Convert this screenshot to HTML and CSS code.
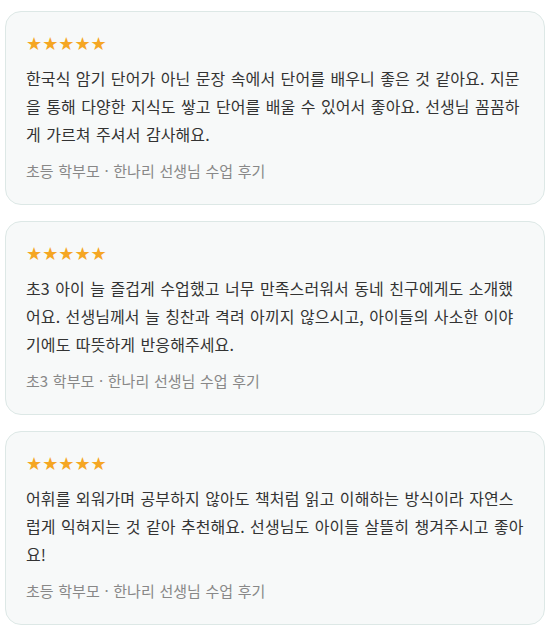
FILE: index.html
```html
<!DOCTYPE html>
<html lang="ko">
<head>
<meta charset="utf-8">
<link rel="stylesheet" href="styles.css">
</head>
<body>
<div class="reviews">
  <div class="card">
    <div class="stars">★★★★★</div>
    <p class="text">한국식 암기 단어가 아닌 문장 속에서 단어를 배우니 좋은 것 같아요. 지문을 통해 다양한 지식도 쌓고 단어를 배울 수 있어서 좋아요. 선생님 꼼꼼하게 가르쳐 주셔서 감사해요.</p>
    <div class="meta">초등 학부모 · 한나리 선생님 수업 후기</div>
  </div>
  <div class="card">
    <div class="stars">★★★★★</div>
    <p class="text">초3 아이 늘 즐겁게 수업했고 너무 만족스러워서 동네 친구에게도 소개했어요. 선생님께서 늘 칭찬과 격려 아끼지 않으시고, 아이들의 사소한 이야기에도 따뜻하게 반응해주세요.</p>
    <div class="meta">초3 학부모 · 한나리 선생님 수업 후기</div>
  </div>
  <div class="card">
    <div class="stars">★★★★★</div>
    <p class="text">어휘를 외워가며 공부하지 않아도 책처럼 읽고 이해하는 방식이라 자연스럽게 익혀지는 것 같아 추천해요. 선생님도 아이들 살뜰히 챙겨주시고 좋아요!</p>
    <div class="meta">초등 학부모 · 한나리 선생님 수업 후기</div>
  </div>
</div>
</body>
</html>
```

FILE: styles.css
```css
html, body {
  margin: 0;
  padding: 0;
  background: #ffffff;
}
body {
  font-family: "Noto Sans CJK KR", "Noto Sans", sans-serif;
  color: #333333;
}
.reviews {
  display: flex;
  flex-direction: column;
  gap: 16px;
  padding: 11px 7px 0 5px;
}
.card {
  background: #f7f9f9;
  border: 1px solid #dde8e6;
  border-radius: 16px;
  padding: 20px 20px 21px 20px;
}
.stars {
  color: #f5a623;
  font-size: 18px;
  line-height: 24px;
  font-family: "DejaVu Sans", sans-serif;
}
.text {
  margin: 8px 0 0 0;
  font-size: 16px;
  line-height: 28px;
  color: #333333;
  word-break: normal;
  letter-spacing: 0.1px;
  word-spacing: 0.8px;
}
.meta {
  margin-top: 11px;
  font-size: 15px;
  line-height: 24px;
  color: #888888;
  word-spacing: 0.5px;
}
```
